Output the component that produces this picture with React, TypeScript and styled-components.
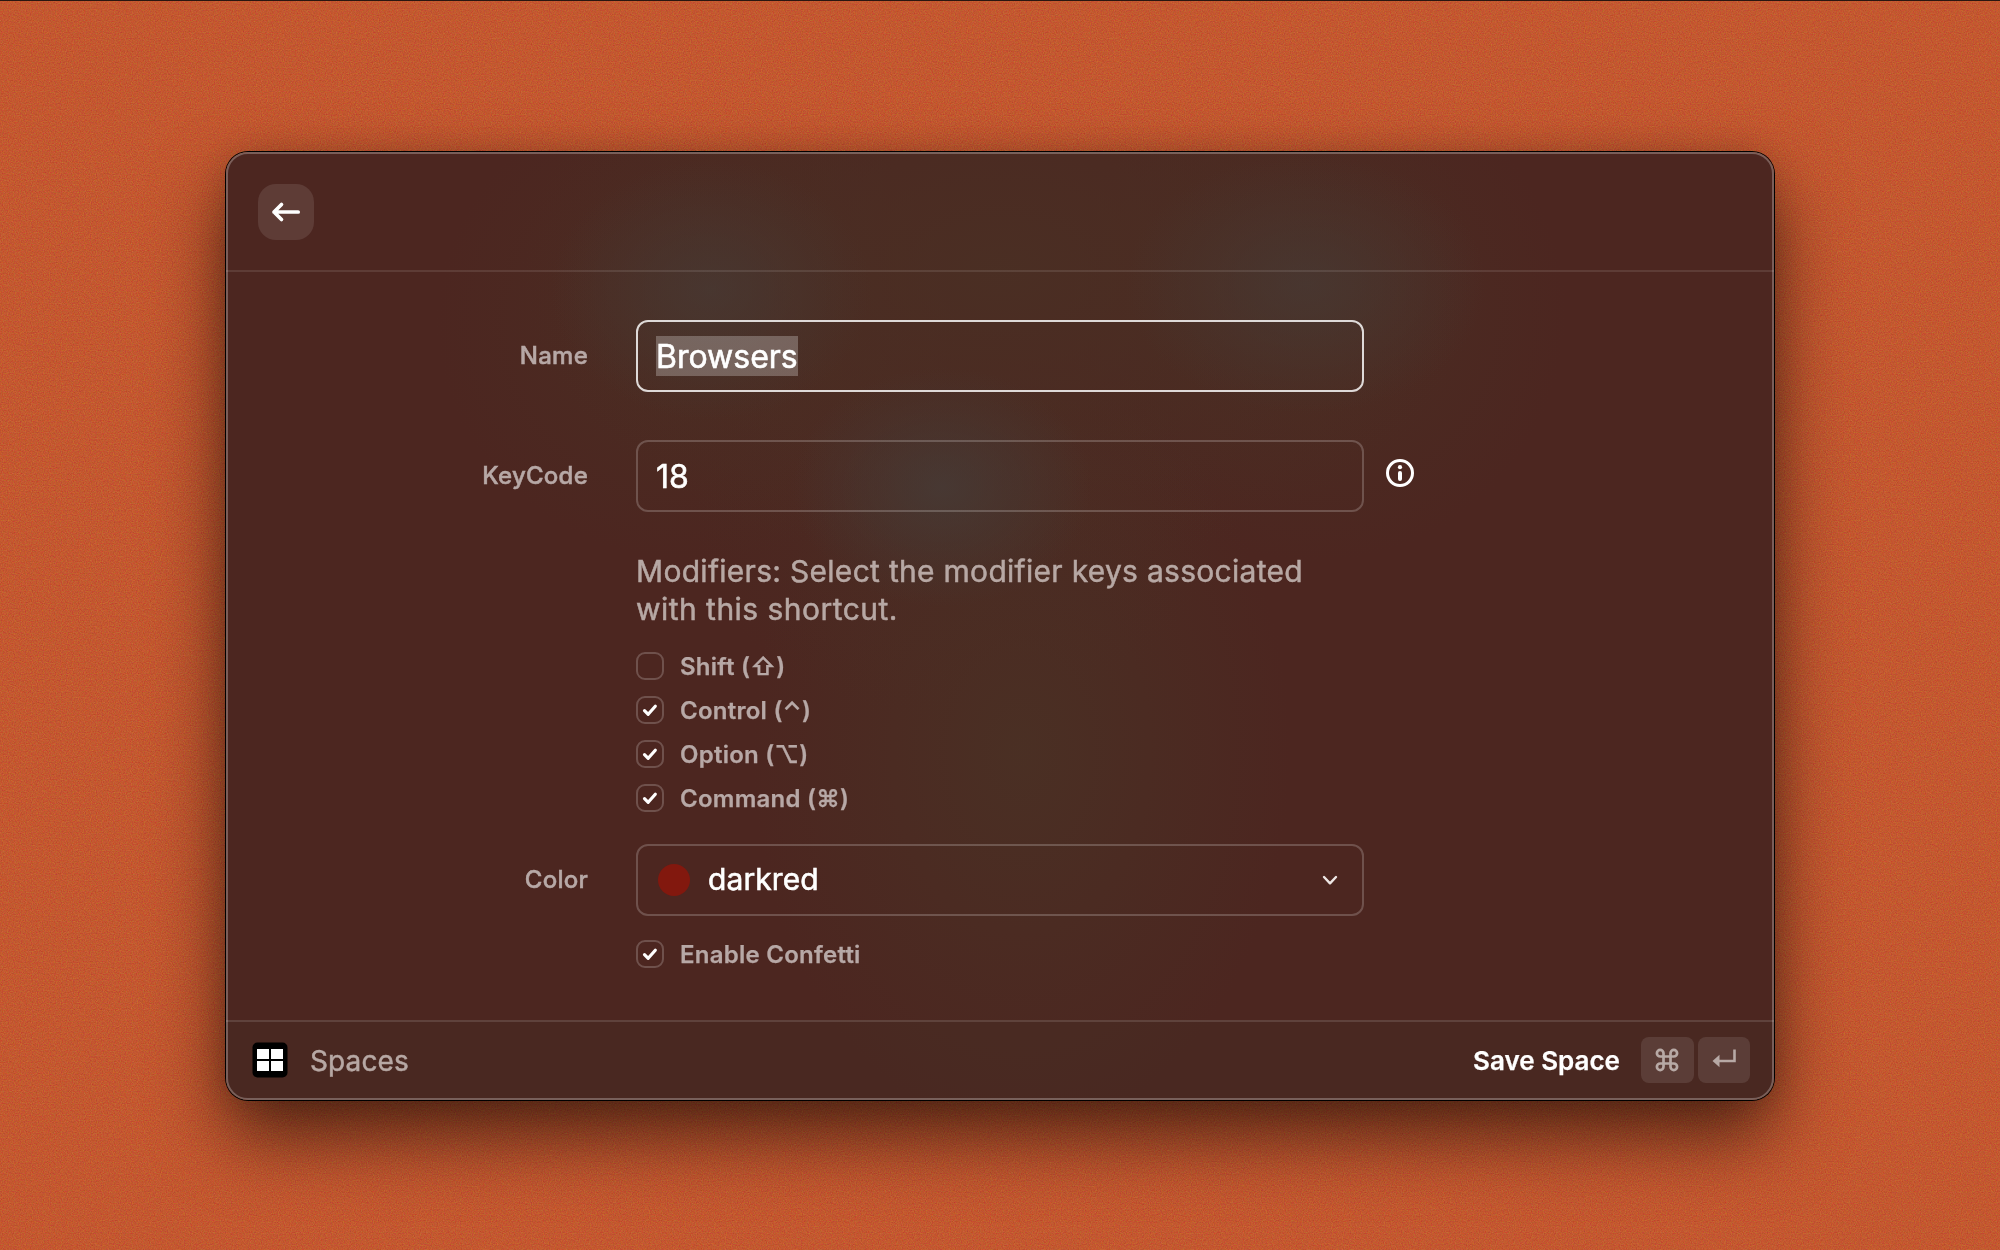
import React from 'react';
import styled, { createGlobalStyle } from 'styled-components';

const Global = createGlobalStyle`
  * { box-sizing: border-box; }
  body { margin: 0; background: #c45930; font-family: Inter, "Liberation Sans", sans-serif; }
`;

const Desktop = styled.main`
  position: relative;
  width: 2000px;
  height: 1250px;
  overflow: hidden;
  padding: 151px 226px 0;
  border-top: 1px solid #2b1610;
  background: #c45930;
`;

const Grain = styled.svg`
  position: absolute;
  inset: 0;
  width: 100%;
  height: 100%;
  opacity: 0.36;
  mix-blend-mode: overlay;
`;

const Window = styled.section`
  position: relative;
  width: 1548px;
  height: 948px;
  border-radius: 22px;
  box-shadow: 0 0 0 1px #000, 0 36px 72px rgba(0, 0, 0, 0.6), 0 0 30px rgba(0, 0, 0, 0.12);
`;

const Surface = styled.div`
  display: flex;
  flex-direction: column;
  height: 100%;
  border-radius: 22px;
  overflow: hidden;
  background:
    radial-gradient(ellipse 160px 130px at 485px 138px, rgba(71, 58, 53, 0.7), rgba(71, 58, 53, 0) 100%),
    radial-gradient(ellipse 180px 130px at 1080px 132px, rgba(71, 58, 53, 0.7), rgba(71, 58, 53, 0) 100%),
    radial-gradient(ellipse 150px 120px at 716px 335px, rgba(70, 60, 56, 0.75), rgba(70, 60, 56, 0) 100%),
    radial-gradient(ellipse 480px 300px at 775px 120px, rgba(74, 48, 36, 0.85), rgba(74, 48, 36, 0) 100%),
    radial-gradient(ellipse 260px 240px at 470px 170px, rgba(74, 48, 36, 0.7), rgba(74, 48, 36, 0) 100%),
    radial-gradient(ellipse 250px 250px at 1090px 160px, rgba(74, 48, 36, 0.7), rgba(74, 48, 36, 0) 100%),
    radial-gradient(ellipse 260px 200px at 730px 370px, rgba(74, 46, 36, 0.6), rgba(74, 46, 36, 0) 100%),
    radial-gradient(ellipse 270px 380px at 795px 600px, rgba(74, 48, 36, 0.95), rgba(74, 48, 36, 0) 100%),
    #4c2620;
`;

const Edge = styled.div`
  position: absolute;
  inset: 0;
  border: 2px solid rgba(255, 255, 255, 0.26);
  border-radius: 22px;
  pointer-events: none;
`;

const Header = styled.header`
  flex: none;
  height: 120px;
  padding: 32px;
  border-bottom: 2px solid rgba(255, 255, 255, 0.1);
`;

const BackButton = styled.button`
  display: grid;
  place-items: center;
  width: 56px;
  height: 56px;
  padding: 0;
  border: 0;
  border-radius: 18px;
  background: rgba(255, 255, 255, 0.1);
`;

const Form = styled.form`
  flex: 1;
  display: flex;
  flex-direction: column;
  padding-top: 48px;
`;

const Row = styled.div<{ $gap?: number }>`
  display: grid;
  grid-template-columns: 362px 728px auto;
  column-gap: 48px;
  align-items: center;
  margin-bottom: ${p => p.$gap ?? 0}px;
`;

const Label = styled.label`
  padding-bottom: 1px;
  text-align: right;
  font-size: 24px;
  font-weight: 500;
  line-height: 32px;
  letter-spacing: 0.25px;
  color: #b7a8a6;
  -webkit-text-stroke: 0.5px #b7a8a6;
`;

const Field = styled.div<{ $focused?: boolean }>`
  display: flex;
  align-items: center;
  height: 72px;
  padding: 0 18px;
  border: 2px solid ${p => (p.$focused ? 'rgba(255,255,255,0.82)' : 'rgba(255,255,255,0.2)')};
  border-radius: 12px;
  font-size: 32px;
  line-height: 42px;
  color: #fff;
  -webkit-text-stroke: 0.6px #fff;
`;

const Value = styled.span<{ $selected?: boolean }>`
  height: 40px;
  background: ${p => (p.$selected ? 'rgba(255, 255, 255, 0.25)' : 'none')};
`;

const Option = styled.span`
  height: 40px;
  font-size: 30px;
  line-height: 39px;
  letter-spacing: 0.1px;
`;

const Info = styled.span`
  display: flex;
  margin: -6px 0 0 -26px;
`;

const Stack = styled.div`
  grid-column: 2;
`;

const Description = styled.p`
  margin: 0 0 16px;
  font-size: 30px;
  line-height: 38px;
  color: #b7a8a4;
  -webkit-text-stroke: 0.5px #b7a8a4;
`;

const Line = styled.span<{ $tracking: number }>`
  display: block;
  letter-spacing: ${p => p.$tracking}px;
`;

const Check = styled.div`
  display: flex;
  align-items: center;
  gap: 16px;
  height: 44px;
  font-size: 24px;
  font-weight: 600;
  letter-spacing: 0.25px;
  color: #b7a8a6;
  -webkit-text-stroke: 0.25px #b7a8a6;
`;

const Box = styled.span`
  display: grid;
  place-items: center;
  width: 28px;
  height: 28px;
  border: 2px solid rgba(255, 255, 255, 0.2);
  border-radius: 9px;
`;

const Dot = styled.span`
  width: 32px;
  height: 32px;
  margin: 0 18px 0 2px;
  border-radius: 50%;
  background: #82180e;
`;

const Chevron = styled.svg`
  margin-left: auto;
  margin-right: 6px;
`;

const Footer = styled.footer`
  flex: none;
  display: flex;
  align-items: center;
  height: 80px;
  padding: 0 24px 2px 26px;
  border-top: 2px solid rgba(255, 255, 255, 0.12);
  background: rgba(70, 44, 36, 0.45);
`;

const AppName = styled.span`
  margin-left: 22px;
  padding-top: 2px;
  font-size: 28px;
  letter-spacing: 0.1px;
  color: #b7a8a4;
  -webkit-text-stroke: 0.5px #b7a8a4;
`;

const Action = styled.span`
  margin-left: auto;
  margin-right: 17px;
  font-size: 26px;
  font-weight: 600;
  color: #fff;
  -webkit-text-stroke: 0.25px #fff;
`;

const Key = styled.kbd<{ $width: number }>`
  display: grid;
  place-items: center;
  width: ${p => p.$width}px;
  height: 46px;
  margin-left: 4px;
  padding-right: 1px;
  border-radius: 8px;
  background: rgba(255, 255, 255, 0.1);
`;

const CheckItem = ({ checked, children }: { checked?: boolean; children: React.ReactNode }) => (
  <Check>
    <Box>
      {checked && (
        <svg width="24" height="24" viewBox="0 0 24 24" fill="none" stroke="#fff" strokeWidth="3.2" strokeLinecap="round" strokeLinejoin="round">
          <path d="M6.5 12.6 10.2 16.3 17.300 8.300" />
        </svg>
      )}
    </Box>
    <span>{children}</span>
  </Check>
);

export default function App() {
  return (
    <>
      <Global />
      <Desktop>
        <Grain aria-hidden="true">
          <filter id="grain" x="0" y="0" width="100%" height="100%" colorInterpolationFilters="sRGB">
            <feTurbulence type="fractalNoise" baseFrequency="0.83" numOctaves="2" seed="4" />
            <feColorMatrix values="1 0 0 0 -0.02  0 1 0 0 -0.02  0 0 1 0 -0.02  0 0 0 0 1" />
          </filter>
          <rect width="100%" height="100%" filter="url(#grain)" />
        </Grain>
        <Window>
          <Surface>
            <Header>
              <BackButton aria-label="Back">
                <svg width="32" height="32" viewBox="0 0 32 32" fill="none" stroke="#fff" strokeWidth="3.7" strokeLinecap="round" strokeLinejoin="round">
                  <path d="M28.200 16H4M11.500 8.500 4 16l7.500 7.500" />
                </svg>
              </BackButton>
            </Header>
            <Form>
              <Row $gap={48}>
                <Label>Name</Label>
                <Field $focused><Value $selected>Browsers</Value></Field>
              </Row>
              <Row $gap={40}>
                <Label>KeyCode</Label>
                <Field><Value>18</Value></Field>
                <Info>
                  <svg width="28" height="28" viewBox="0 0 28 28" fill="none">
                    <circle cx="14" cy="14" r="12.500" stroke="#fff" strokeWidth="3" />
                    <circle cx="14" cy="8.200" r="2.100" fill="#fff" />
                    <path d="M14 14V20" stroke="#fff" strokeWidth="4" strokeLinecap="round" />
                  </svg>
                </Info>
              </Row>
              <Row $gap={24}>
                <Stack>
                  <Description>
                    <Line $tracking={0.29}>Modifiers: Select the modifier keys associated</Line>
                    <Line $tracking={0.46}>with this shortcut.</Line>
                  </Description>
                  <CheckItem>Shift (⇧)</CheckItem>
                  <CheckItem checked>Control (⌃)</CheckItem>
                  <CheckItem checked>Option (⌥)</CheckItem>
                  <CheckItem checked>Command (⌘)</CheckItem>
                </Stack>
              </Row>
              <Row $gap={16}>
                <Label>Color</Label>
                <Field>
                  <Dot />
                  <Option>darkred</Option>
                  <Chevron width="16" height="16" viewBox="0 0 16 16" fill="none" stroke="#eee6e4" strokeWidth="2.400" strokeLinecap="round" strokeLinejoin="round">
                    <path d="M2 5 8 11.300 14 5" />
                  </Chevron>
                </Field>
              </Row>
              <Row>
                <Stack><CheckItem checked>Enable Confetti</CheckItem></Stack>
              </Row>
            </Form>
            <Footer>
              <svg width="36" height="36" viewBox="0 0 36 36">
                <rect x="0.500" y="0.500" width="35" height="35" rx="5" fill="#000" />
                <path d="M5 7h12v10H5zM19 7h12v10H19zM5 19h12v10H5zM19 19h12v10H19z" fill="#fff" />
              </svg>
              <AppName>Spaces</AppName>
              <Action>Save Space</Action>
              <Key $width={53}>
                <svg width="24" height="24" viewBox="0 0 24 24" fill="none" stroke="#b7a9a5" strokeWidth="2.700">
                  <path d="M8.500 8.500h7v7h-7zM8.500 8.500V5.200a3.300 3.300 0 1 0-3.300 3.300zM15.500 8.500h3.300a3.300 3.300 0 1 0-3.300-3.300zM15.500 15.500v3.300a3.300 3.300 0 1 0 3.300-3.300zM8.500 15.500H5.200a3.300 3.300 0 1 0 3.300 3.300z" />
                </svg>
              </Key>
              <Key $width={52}>
                <svg width="24" height="24" viewBox="0 0 24 24">
                  <path d="M22.500 1.500V13H5" fill="none" stroke="#b7a9a5" strokeWidth="2.600" />
                  <path d="M0.500 13 7.500 6.800V19.200z" fill="#b7a9a5" />
                </svg>
              </Key>
            </Footer>
          </Surface>
          <Edge />
        </Window>
      </Desktop>
    </>
  );
}
